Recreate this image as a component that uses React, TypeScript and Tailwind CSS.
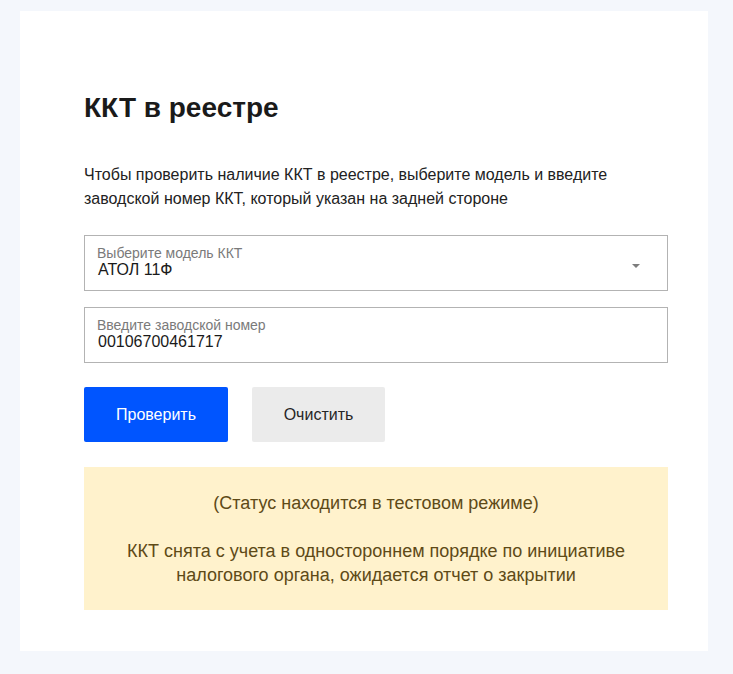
export default function App() {
  return (
    <div className="min-h-[674px] bg-[#f4f7fc] pt-[11px] pl-[20px] font-['Liberation_Sans',Arial,sans-serif]">
      <div className="w-[688px] bg-white pt-[81px] pb-[41px] pl-[64px] pr-[40px]">
        <h1 className="text-[28px] font-bold leading-[32px] text-[#1a1a1a]">ККТ в реестре</h1>
        <p className="mt-[39px] text-[16px] leading-[24px] text-[#222]">
          Чтобы проверить наличие ККТ в реестре, выберите модель и введите
          <br />
          заводской номер ККТ, который указан на задней стороне
        </p>

        <div className="mt-6 flex flex-col gap-4">
          <div className="relative flex h-[56px] flex-col justify-center border border-[#b3b3b3] px-3 pb-[2px]">
            <span className="text-[14px] leading-[15px] text-[#7a7a7a]">Выберите модель ККТ</span>
            <span className="pl-px text-[16px] leading-[18px] text-[#1a1a1a]">АТОЛ 11Ф</span>
            <svg className="absolute right-[27px] top-[28px]" width="8" height="4" viewBox="0 0 8 4">
              <path d="M0 0h8L4 4z" fill="#7d7d7d" />
            </svg>
          </div>
          <div className="flex h-[56px] flex-col justify-center border border-[#b3b3b3] px-3 pb-[2px]">
            <span className="text-[14px] leading-[15px] text-[#7a7a7a]">Введите заводской номер</span>
            <span className="pl-px text-[16px] leading-[18px] text-[#1a1a1a]">00106700461717</span>
          </div>
        </div>

        <div className="mt-6 flex gap-6">
          <button className="h-[55px] w-[144px] rounded-[2px] bg-[#0055ff] text-[16px] text-white">Проверить</button>
          <button className="h-[55px] w-[133px] rounded-[2px] bg-[#ebebeb] text-[16px] text-[#262626]">Очистить</button>
        </div>

        <div className="mt-[25px] bg-[#fff2cc] pt-6 pb-[23px] text-center text-[18px] leading-[24px] text-[#5e4a17]">
          (Статус находится в тестовом режиме)
          <br />
          <br />
          ККТ снята с учета в одностороннем порядке по инициативе
          <br />
          налогового органа, ожидается отчет о закрытии
        </div>
      </div>
    </div>
  );
}
